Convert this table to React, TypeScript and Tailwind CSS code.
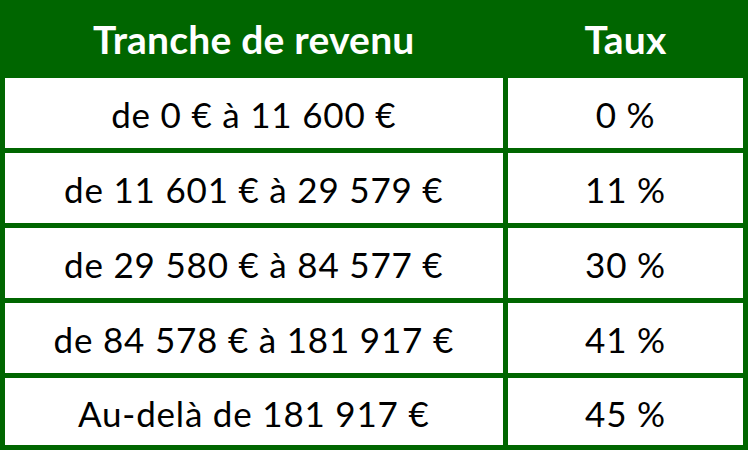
import React from "react";

const rows = [
  { range: "de 0 € à 11 600 €", rate: "0 %" },
  { range: "de 11 601 € à 29 579 €", rate: "11 %" },
  { range: "de 29 580 € à 84 577 €", rate: "30 %" },
  { range: "de 84 578 € à 181 917 €", rate: "41 %" },
  { range: "Au-delà de 181 917 €", rate: "45 %" },
];

const App = () => {
  return (
    <div className="w-[748px] h-[450px] bg-[#006600] px-[5px] pb-[5.5px] grid grid-cols-[497.5px_1fr] grid-rows-[72.5px_69.5px_69.5px_69.5px_69.5px_1fr] gap-[5.5px] font-['Lato',sans-serif]">
      <div className="flex items-center justify-center text-white font-bold text-[39px] tracking-[0.2px] pt-[5px]">
        Tranche de revenu
      </div>
      <div className="flex items-center justify-center text-white font-bold text-[39px] tracking-[0.2px] pt-[5px]">
        Taux
      </div>
      {rows.map((row, index) => (
        <React.Fragment key={index}>
          <div className="bg-white flex items-center justify-center text-black text-[35px] tracking-[0.8px] pt-[3px]">
            {row.range}
          </div>
          <div className="bg-white flex items-center justify-center text-black text-[35px] tracking-[0.8px] pt-[3px]">
            {row.rate}
          </div>
        </React.Fragment>
      ))}
    </div>
  );
};

export default App;
